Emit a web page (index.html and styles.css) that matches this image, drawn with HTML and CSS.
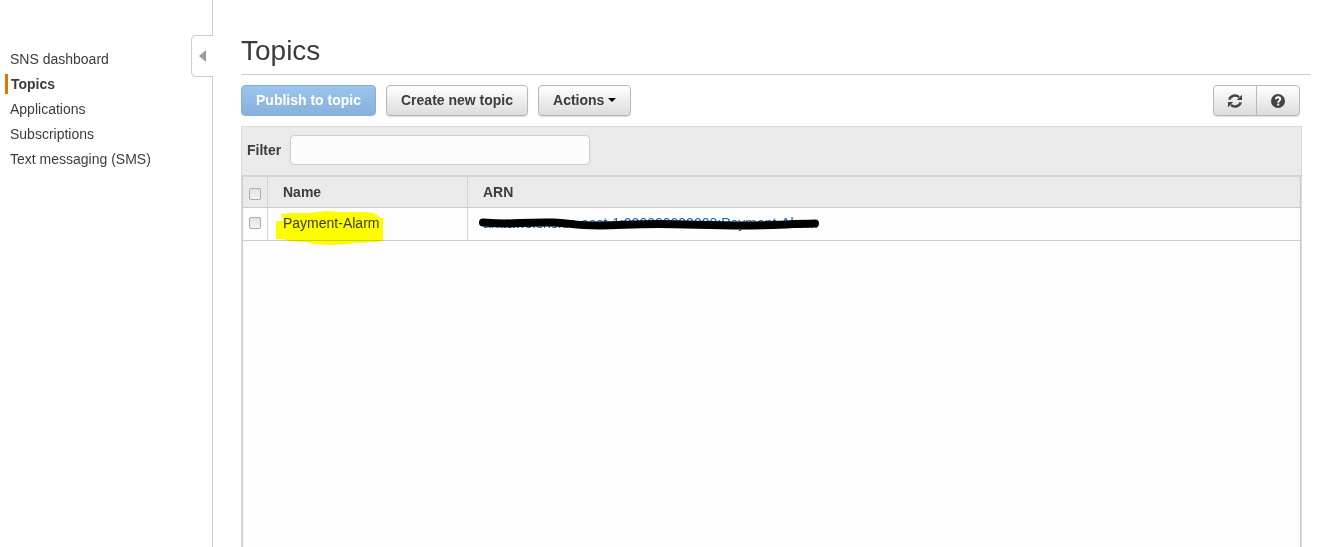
FILE: index.html
```html
<!DOCTYPE html>
<html lang="en">
<head>
<meta charset="utf-8">
<title>Topics</title>
<meta name="viewport" content="width=device-width, initial-scale=1">
<link rel="stylesheet" href="styles.css">
</head>
<body>
<div class="layout">
  <aside class="sidebar">
    <nav class="nav">
      <a class="nav-link" href="#">SNS dashboard</a>
      <a class="nav-link active" href="#" aria-current="page">Topics</a>
      <a class="nav-link" href="#">Applications</a>
      <a class="nav-link" href="#">Subscriptions</a>
      <a class="nav-link" href="#">Text messaging (SMS)</a>
    </nav>
    <button class="collapse" type="button" aria-label="Collapse navigation">
      <svg width="7" height="12" viewBox="0 0 7 12" aria-hidden="true"><path d="M7 0v12L0 6z" fill="#999"/></svg>
    </button>
  </aside>
  <main class="main">
    <h1 class="title">Topics</h1>
    <div class="toolbar">
      <button class="btn primary" type="button">Publish to topic</button>
      <button class="btn" type="button">Create new topic</button>
      <button class="btn menu" type="button">Actions <svg width="8" height="4" viewBox="0 0 8 4" aria-hidden="true"><path d="M0 0h8L4 4z" fill="#000"/></svg></button>
      <div class="group">
        <button class="btn icon" type="button" aria-label="Refresh">
          <svg width="14" height="14" viewBox="0 0 14 14" aria-hidden="true"><path d="M1.300 5.600A5.800 5.500 0 0 1 11 3.200M12.700 8.400A5.800 5.500 0 0 1 3 10.800" fill="none" stroke="#444" stroke-width="2.500"/><path d="M14 .7v5.200H8.800zM0 13.300v-5.200h5.200z" fill="#444"/></svg>
        </button>
        <button class="btn icon" type="button" aria-label="Help">
          <svg width="14" height="14" viewBox="0 0 14 14" aria-hidden="true"><circle cx="7" cy="7" r="7" fill="#444"/><path d="M4.900 5.300C5 3.800 6 3.200 7.100 3.200c1.200 0 2.200.7 2.200 1.900C9.300 6.700 7.200 6.600 7.200 8.700" fill="none" stroke="#fff" stroke-width="1.900"/><path d="M6.200 9.600h2v1.900h-2z" fill="#fff"/></svg>
        </button>
      </div>
    </div>
    <section class="panel">
      <div class="filter">
        <label for="filter">Filter</label>
        <input class="filter-input" id="filter" type="text">
      </div>
      <div class="grid">
        <table class="table">
          <thead>
            <tr>
              <th class="check"><input type="checkbox" class="box" aria-label="Select all topics"></th>
              <th class="name">Name</th>
              <th>ARN</th>
            </tr>
          </thead>
          <tbody>
            <tr>
              <td class="check"><input type="checkbox" class="box" aria-label="Select Payment-Alarm"></td>
              <td class="name"><span class="marked">Payment-Alarm<svg class="highlight" width="110" height="34" viewBox="0 0 110 34" aria-hidden="true"><path d="M7 3l9-1 22 0 4-1 14-1 10 1 24 0 9 1 4 2 2 1 0 2 4 0 0 22-2 1-3 1-7 0-8 1-9 0-6 1-17 1-18-1-7-2-17-1-7-2-6 0 0-18 7 0z" fill="#ff0"/></svg></span></td>
              <td><span class="marked"><a class="arn" href="#">arn:aws:sns:us-east-1:000000000000:Payment-Alarm</a><svg class="stroke" width="344" height="16" viewBox="0 0 344 16" aria-hidden="true"><path d="M5 6.500C12 7 16 7.500 26 7.500C45 7 55 6 75 6.500S92 9.500 122 9.500C142 9.500 152 8 180 8C210 8 230 9.500 265 9.500C295 9.500 310 8 337 7.500" fill="none" stroke="#000" stroke-width="8" stroke-linecap="round"/></svg></span></td>
            </tr>
          </tbody>
        </table>
      </div>
    </section>
  </main>
</div>
</body>
</html>
```
FILE: styles.css
```css
* { box-sizing: border-box; }

body {
  margin: 0;
  background: #fff;
  color: #3c3c3c;
  font: 14px/20px "Liberation Sans", Arial, sans-serif;
}

.layout {
  display: flex;
  min-height: 100vh;
}

.sidebar {
  position: relative;
  flex: 0 0 213px;
  padding: 49px 0 0 5px;
  border-right: 1px solid #ccc;
}

.nav {
  display: flex;
  flex-direction: column;
  gap: 5px;
}

.nav-link {
  padding-left: 5px;
  color: inherit;
  text-decoration: none;
}

.nav-link.active {
  padding-left: 3px;
  border-left: 3px solid #e07700;
  font-weight: bold;
}

.collapse {
  position: absolute;
  top: 35px;
  right: -1px;
  display: flex;
  align-items: center;
  justify-content: center;
  width: 22px;
  height: 42px;
  padding: 0;
  border: 1px solid #ccc;
  border-right: 0;
  border-radius: 5px 0 0 5px;
  background: #fff;
}

.main {
  display: flex;
  flex: 1;
  flex-direction: column;
  min-width: 0;
  padding: 34px 18px 0 28px;
}

.title {
  margin: 0;
  padding-bottom: 6px;
  border-bottom: 1px solid #ccc;
  font-size: 28px;
  font-weight: normal;
  line-height: 34px;
}

.toolbar {
  display: flex;
  gap: 10px;
  margin: 10px 11px 10px 0;
}

.btn {
  height: 31px;
  padding: 0 14px 2px;
  border: 1px solid #b8b8b8;
  border-radius: 4px;
  background: linear-gradient(#fff, #dcdcdc);
  box-shadow: 0 1px 1px #ddd;
  color: #3c3c3c;
  font: bold 14px/20px "Liberation Sans", Arial, sans-serif;
}

.btn.primary {
  border-color: #84afdc;
  background: linear-gradient(#9bc5ee, #87b0db);
  box-shadow: none;
  color: #fff;
}

.btn.menu {
  display: flex;
  align-items: center;
  gap: 4px;
}

.group {
  display: flex;
  margin-left: auto;
}

.btn.icon {
  display: flex;
  align-items: center;
  justify-content: center;
  width: 44px;
  padding: 0;
}

.btn.icon:first-child { border-radius: 4px 0 0 4px; }

.btn.icon:last-child {
  margin-left: -1px;
  border-radius: 0 4px 4px 0;
}

.panel {
  display: flex;
  flex: 1;
  flex-direction: column;
  margin-right: 9px;
  border: 1px solid #dadada;
  border-bottom: 0;
  background: #eaeaea;
}

.filter {
  display: flex;
  align-items: center;
  gap: 9px;
  padding: 8px 5px 10px;
  font-weight: bold;
}

.filter-input {
  width: 300px;
  height: 30px;
  padding: 0 8px;
  border: 1px solid #ccc;
  border-radius: 4px;
  background: #fcfcfc;
  color: #444;
  font: 14px/20px "Liberation Sans", Arial, sans-serif;
}

.grid {
  flex: 1;
  border: 1px solid #ccc;
  border-top: 2px solid #d3d3d3;
  border-bottom: 0;
  background: #fdfdfd;
}

.table {
  width: 100%;
  border-collapse: separate;
  border-spacing: 0;
  table-layout: fixed;
}

.table th,
.table td {
  height: 33px;
  padding: 0 15px 2px;
  border-bottom: 1px solid #ccc;
  text-align: left;
}

.table th {
  height: 31px;
  padding-bottom: 0;
  background: #eaeaea;
}

.table .check {
  width: 25px;
  padding-right: 0;
  padding-left: 6px;
  border-right: 1px solid #d3d3d3;
}

.table .name {
  width: 200px;
  border-right: 1px solid #d3d3d3;
}

.box {
  display: block;
  appearance: none;
  width: 12px;
  height: 12px;
  margin: 0;
  border: 1px solid #aaa;
  border-radius: 2px;
  background: linear-gradient(#e2e2e2, #f4f4f4);
}

.table th .box { margin-top: 4px; }

.marked {
  position: relative;
  display: block;
  white-space: nowrap;
}

.arn {
  color: #0f66c0;
  text-decoration: none;
}

.highlight {
  position: absolute;
  top: -2px;
  left: -9px;
  mix-blend-mode: multiply;
}

.stroke {
  position: absolute;
  top: 3px;
  left: -5px;
}
```
